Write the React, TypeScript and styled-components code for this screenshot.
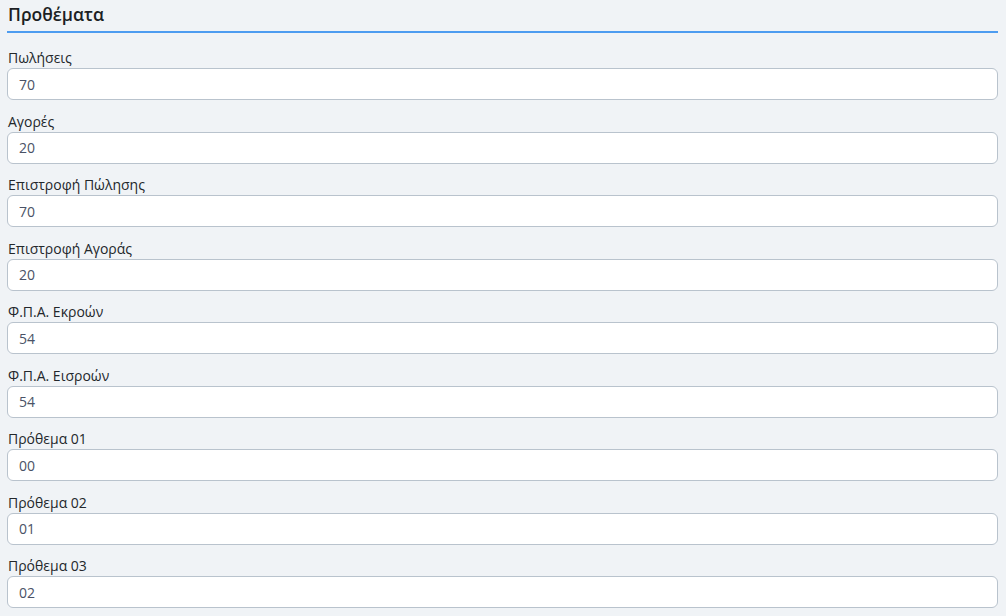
import React from 'react';
import styled, { createGlobalStyle } from 'styled-components';

const GlobalStyle = createGlobalStyle`
	html, body {
		margin: 0;
		padding: 0;
		background-color: #f0f3f6;
	}
	body {
		font-family: 'Open Sans', 'Liberation Sans', sans-serif;
	}
`;

interface Prefix {
	label: string;
	value: string;
}

const prefixes: Prefix[] = [
	{ label: 'Πωλήσεις', value: '70' },
	{ label: 'Αγορές', value: '20' },
	{ label: 'Επιστροφή Πώλησης', value: '70' },
	{ label: 'Επιστροφή Αγοράς', value: '20' },
	{ label: 'Φ.Π.Α. Εκροών', value: '54' },
	{ label: 'Φ.Π.Α. Εισροών', value: '54' },
	{ label: 'Πρόθεμα 01', value: '00' },
	{ label: 'Πρόθεμα 02', value: '01' },
	{ label: 'Πρόθεμα 03', value: '02' },
];

const Page = styled.div`
	padding: 0 8px 0 7px;
`;

const Title = styled.h2`
	margin: 0 0 14px 0;
	padding: 3px 1px 5px;
	font-size: 17.5px;
	font-weight: 600;
	line-height: 23px;
	color: #1c1f24;
	border-bottom: 2px solid #4d9cf0;
`;

const Group = styled.div`
	display: flex;
	flex-direction: column;
	margin-bottom: 10.5px;
`;

const Label = styled.label`
	font-size: 14px;
	line-height: 21px;
	color: #23272b;
	margin: 0 0 0 1px;
`;

const Input = styled.input`
	box-sizing: border-box;
	width: 100%;
	height: 32px;
	padding: 0 11px;
	font-family: inherit;
	font-size: 14px;
	color: #4a5266;
	background: #fff;
	border: 1px solid #b9c3cd;
	border-radius: 6px;
	outline: none;
`;

export default function App() {
	return (
		<Page>
			<GlobalStyle />
			<Title>Προθέματα</Title>
			{prefixes.map((p) => (
				<Group key={p.label}>
					<Label>{p.label}</Label>
					<Input type="text" defaultValue={p.value} />
				</Group>
			))}
		</Page>
	);
}
